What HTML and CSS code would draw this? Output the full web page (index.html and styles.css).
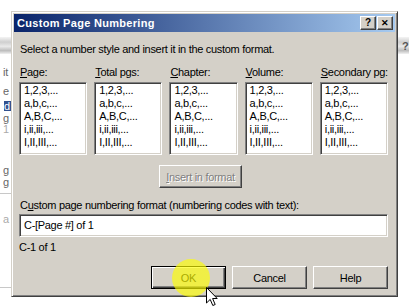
FILE: index.html
```html
<!DOCTYPE html>
<html>
  <head>
    <meta charset="UTF-8" />
    <title>Custom Page Numbering</title>
    <link rel="stylesheet" href="styles.css">
  </head>
  <body>
    <!-- the word window behind the dialog -->
    <div class="backdrop">
      <div class="bg-toolbar"></div>
      <div class="bg-help">?</div>
      <div class="bg-side">
        <div class="bg-line" style="top: 67px">it</div>
        <div class="bg-line" style="top: 86px">e</div>
        <div class="bg-line bg-sel" style="top: 101px">d</div>
        <div class="bg-line" style="top: 113px">g</div>
        <div class="bg-line bg-faint" style="top: 124px">1</div>
        <div class="bg-line" style="top: 165px">g</div>
        <div class="bg-line" style="top: 177px">g</div>
        <div class="bg-rule" style="top: 193px"></div>
        <div class="bg-line bg-faint" style="top: 214px">a</div>
        <div class="bg-rule" style="top: 287px"></div>
      </div>
    </div>

    <div class="dialog">
      <div class="titlebar">
        <span class="title">Custom Page Numbering</span>
        <div class="caption">
          <button class="cap cap-help">?</button>
          <button class="cap cap-close">✕</button>
        </div>
      </div>

      <div class="content">
        <p class="intro">Select a number style and insert it in the custom format.</p>

        <div class="lists">
          <div class="col">
            <div class="label"><u>P</u>age:</div>
            <ul class="listbox">
              <li>1,2,3,...</li><li>a,b,c,...</li><li>A,B,C,...</li><li>i,ii,iii,...</li><li>I,II,III,...</li>
            </ul>
          </div>
          <div class="col">
            <div class="label"><u>T</u>otal pgs:</div>
            <ul class="listbox">
              <li>1,2,3,...</li><li>a,b,c,...</li><li>A,B,C,...</li><li>i,ii,iii,...</li><li>I,II,III,...</li>
            </ul>
          </div>
          <div class="col">
            <div class="label"><u>C</u>hapter:</div>
            <ul class="listbox">
              <li>1,2,3,...</li><li>a,b,c,...</li><li>A,B,C,...</li><li>i,ii,iii,...</li><li>I,II,III,...</li>
            </ul>
          </div>
          <div class="col">
            <div class="label"><u>V</u>olume:</div>
            <ul class="listbox">
              <li>1,2,3,...</li><li>a,b,c,...</li><li>A,B,C,...</li><li>i,ii,iii,...</li><li>I,II,III,...</li>
            </ul>
          </div>
          <div class="col">
            <div class="label"><u>S</u>econdary pg:</div>
            <ul class="listbox">
              <li>1,2,3,...</li><li>a,b,c,...</li><li>A,B,C,...</li><li>i,ii,iii,...</li><li>I,II,III,...</li>
            </ul>
          </div>
        </div>

        <div class="insert-row">
          <button class="btn btn-insert" disabled><u>I</u>nsert in format</button>
        </div>

        <div class="label fmt-label">C<u>u</u>stom page numbering format (numbering codes with text):</div>
        <div class="field">C-[Page #] of 1</div>
        <div class="preview">C-1 of 1</div>

        <div class="actions">
          <button class="btn btn-default">OK</button>
          <button class="btn">Cancel</button>
          <button class="btn">Help</button>
        </div>
      </div>
    </div>

    <!-- click highlight and mouse pointer over the OK button -->
    <div class="click-spot"></div>
    <svg class="pointer" width="12" height="20" viewBox="0 0 12 20">
      <path d="M0.5 0.5 L0.5 16 L4.2 12.4 L6.8 18.5 L9.2 17.5 L6.6 11.5 L11.2 11.5 Z" fill="#fff" stroke="#000" stroke-width="1" />
    </svg>
  </body>
</html>
```

FILE: styles.css
```css
body {
  margin: 0;
  padding: 11px 0 0 11px;
  width: 409px;
  height: 308px;
  box-sizing: border-box;
  overflow: hidden;
  position: relative;
  background-color: #fff;
  font-family: "Liberation Sans", Arial, sans-serif;
  font-size: 11px;
  letter-spacing: -0.3px;
  color: #000;
}

/* Background window */
.backdrop {
  position: absolute;
  left: 0;
  top: 0;
  width: 409px;
  height: 308px;
}

.bg-toolbar {
  position: absolute;
  left: 0;
  right: 0;
  top: 37px;
  height: 17px;
  background: linear-gradient(#f4f4f4, #cfcfcf 30%, #e9e9e9 55%, #bdbdbd 80%, #f2f2f2);
}

.bg-help {
  position: absolute;
  left: 402px;
  top: 40px;
  font-weight: bold;
  color: #555;
}

.bg-side {
  position: absolute;
  left: 0;
  top: 0;
  width: 11px;
  height: 308px;
  overflow: hidden;
}

.bg-line {
  position: absolute;
  left: 3px;
  font-size: 11px;
  line-height: 11px;
  color: #666;
}

.bg-faint {
  color: #aaa;
}

.bg-sel {
  left: 4px;
  width: 7px;
  height: 10px;
  line-height: 10px;
  background-color: #31518f;
  color: #fff;
}

.bg-rule {
  position: absolute;
  left: 0;
  width: 11px;
  height: 1px;
  background-color: #c8c8c8;
}

/* Dialog frame */
.dialog {
  position: relative;
  width: 387px;
  height: 286px;
  box-sizing: border-box;
  padding: 2px;
  background-color: #d4d0c8;
  border: 1px solid;
  border-color: #d4d0c8 #404040 #404040 #d4d0c8;
  box-shadow: inset 1px 1px #fff, inset -1px -1px #808080;
}

.titlebar {
  height: 18px;
  display: flex;
  align-items: center;
  justify-content: space-between;
  padding: 0 2px 0 3px;
  background: linear-gradient(to right, #0a246a, #a6caf0);
}

.title {
  color: #fff;
  font-weight: bold;
  font-size: 11px;
  letter-spacing: 0.3px;
}

.caption {
  display: flex;
  gap: 1px;
}

.cap {
  width: 16px;
  height: 14px;
  padding: 0;
  margin: 0;
  font-family: "Liberation Sans", Arial, sans-serif;
  font-size: 10px;
  font-weight: bold;
  line-height: 12px;
  color: #000;
  background-color: #d4d0c8;
  border: 1px solid;
  border-color: #fff #404040 #404040 #fff;
  box-shadow: inset -1px -1px #808080;
}

.cap-close {
  font-size: 9px;
}

/* Dialog body */
.content {
  padding: 11px 7px 0 5px;
}

.intro {
  margin: 0 0 0 1px;
  line-height: 13px;
}

.lists {
  margin-top: 10px;
  display: grid;
  grid-template-columns: repeat(5, 1fr);
  column-gap: 7px;
}

.label {
  line-height: 13px;
  padding-left: 1px;
  white-space: nowrap;
}

.listbox {
  list-style: none;
  margin: 3px 0 0 0;
  padding: 1px 0 0 3px;
  height: 73px;
  box-sizing: border-box;
  background-color: #fff;
  border: 1px solid;
  border-color: #808080 #fff #fff #808080;
  box-shadow: inset 1px 1px #404040, inset -1px -1px #d4d0c8;
}

.listbox li {
  line-height: 13px;
  padding-left: 1px;
}

.insert-row {
  display: flex;
  margin-top: 10px;
  padding-left: 140px;
}

/* Push buttons */
.btn {
  width: 75px;
  height: 23px;
  padding: 0;
  margin: 0;
  font-family: "Liberation Sans", Arial, sans-serif;
  font-size: 11px;
  letter-spacing: -0.3px;
  color: #000;
  background-color: #d4d0c8;
  border: 1px solid;
  border-color: #fff #404040 #404040 #fff;
  box-shadow: inset -1px -1px #808080;
}

.btn-insert {
  width: 83px;
  color: #808080;
  text-shadow: 1px 1px #fff;
}

.btn-default {
  border: 1px solid #000;
  box-shadow: inset 1px 1px #fff, inset -1px -1px #404040, inset -2px -2px #808080;
}

.fmt-label {
  margin-top: 11px;
}

.field {
  margin-top: 2px;
  height: 23px;
  box-sizing: border-box;
  padding: 0 4px;
  line-height: 21px;
  background-color: #fff;
  border: 1px solid;
  border-color: #808080 #fff #fff #808080;
  box-shadow: inset 1px 1px #404040, inset -1px -1px #d4d0c8;
}

.preview {
  margin-top: 4px;
  line-height: 13px;
}

.actions {
  display: flex;
  justify-content: flex-end;
  gap: 6px;
  margin-top: 12px;
}

/* Overlays */
.click-spot {
  position: absolute;
  left: 172px;
  top: 259px;
  width: 38px;
  height: 38px;
  border-radius: 50%;
  background: radial-gradient(circle, rgba(255, 255, 0, 0.65) 70%, rgba(255, 255, 0, 0.35) 90%, rgba(255, 255, 0, 0) 100%);
}

.pointer {
  position: absolute;
  left: 206px;
  top: 287px;
}
```
